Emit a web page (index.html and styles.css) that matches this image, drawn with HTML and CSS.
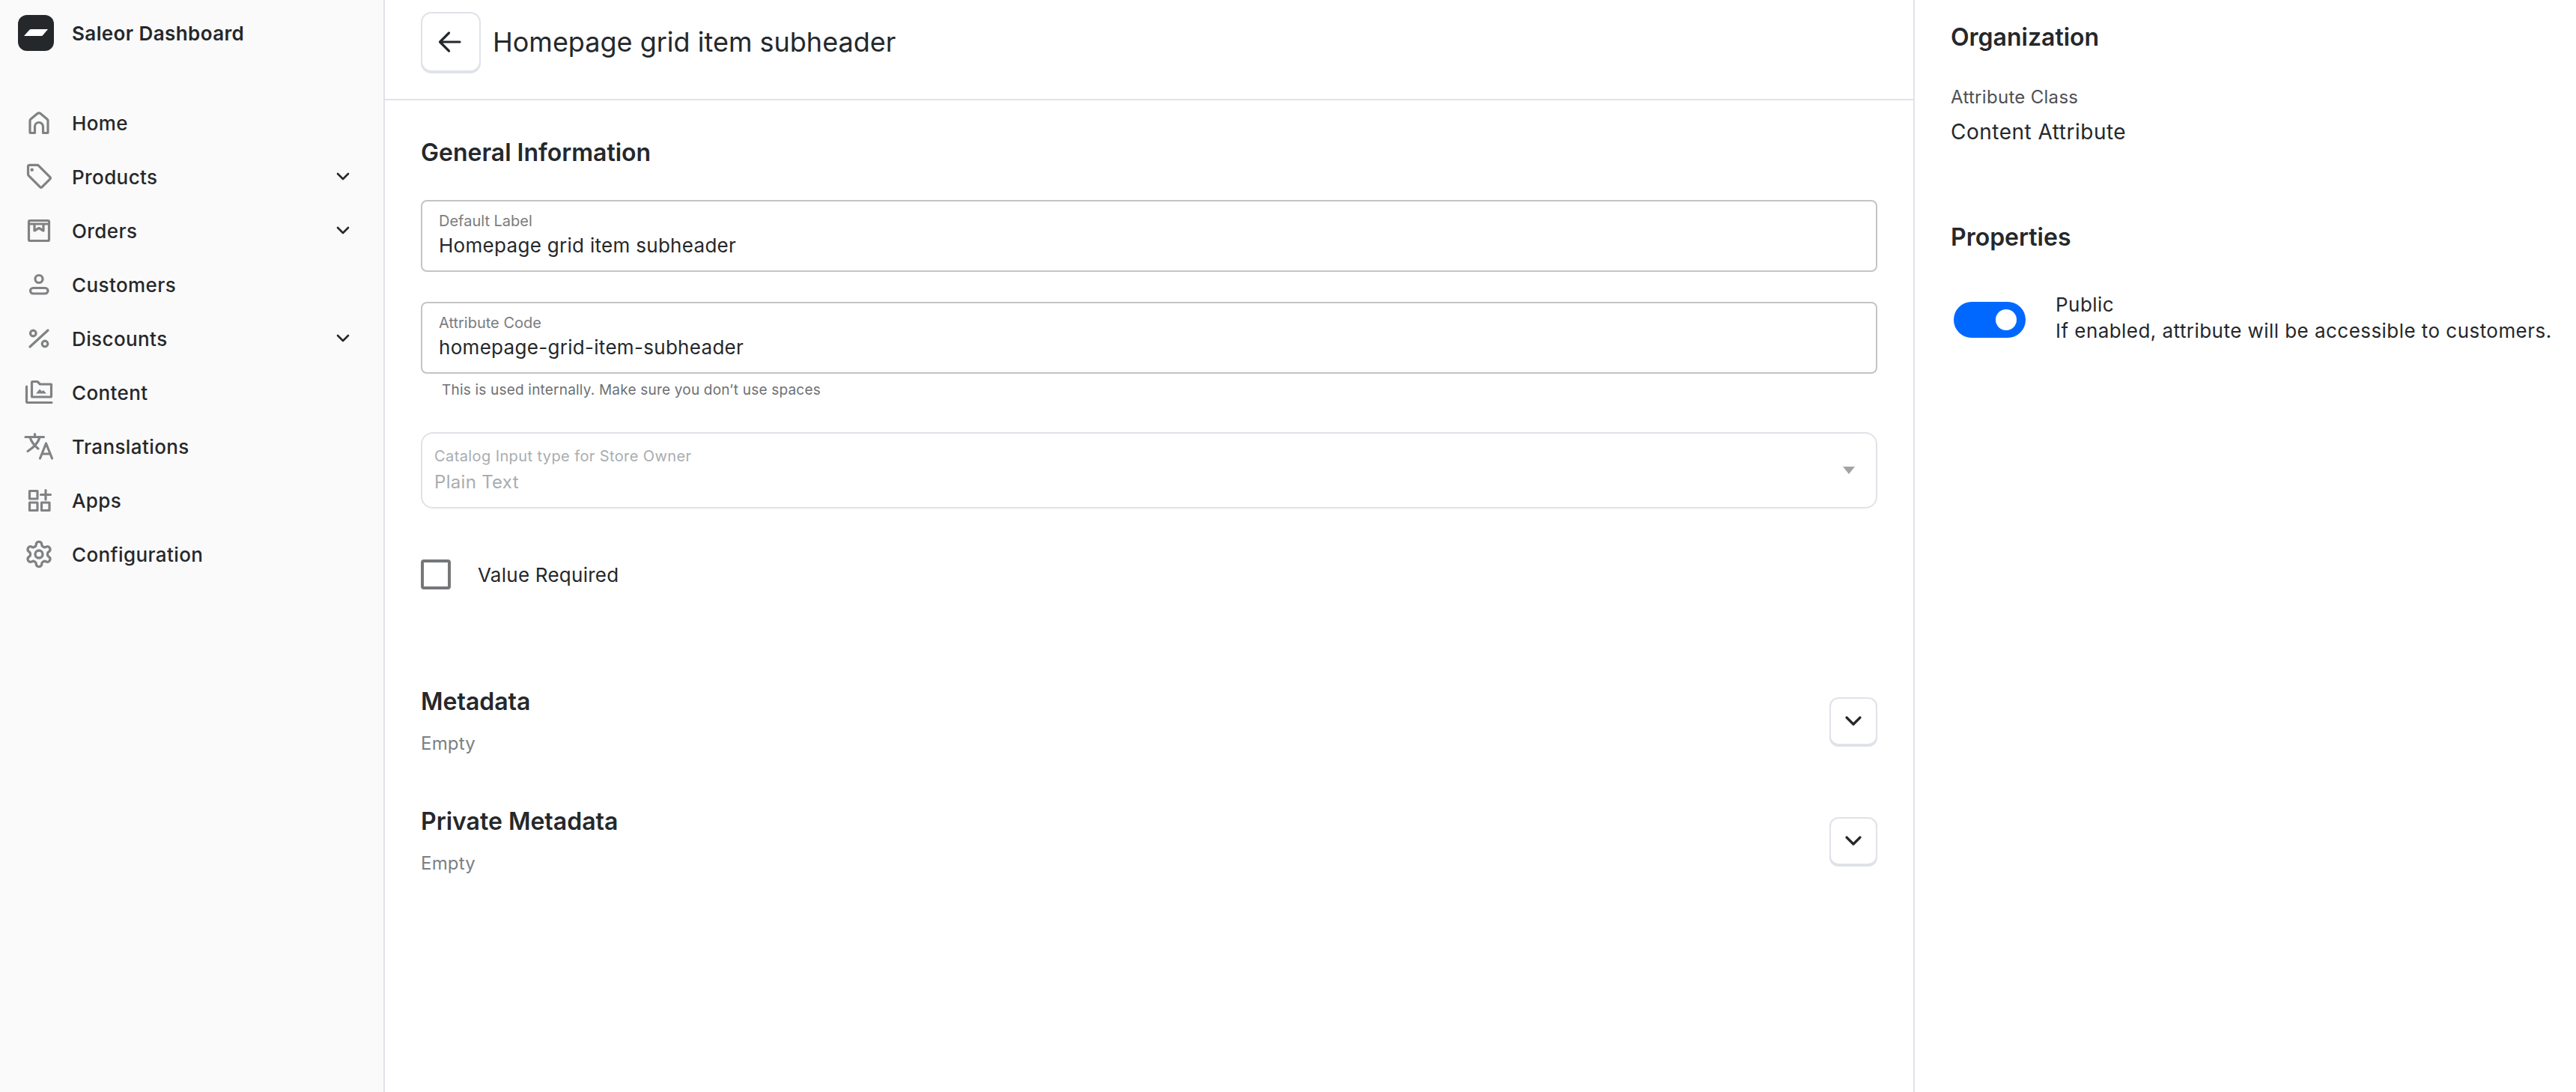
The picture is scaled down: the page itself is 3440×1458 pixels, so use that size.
FILE: index.html
```html
<!DOCTYPE html>
<html lang="en">
<head>
<meta charset="utf-8">
<title>Homepage grid item subheader</title>
<link rel="stylesheet" href="styles.css">
</head>
<body>
<div class="app">
  <aside class="sidebar">
    <div class="brand">
      <div class="logo"><svg width="48" height="48" viewBox="0 0 48 48"><path class="logo-mark" d="M15 20.2c.8-.8 1.5-1.2 2.6-1.2H40l-7 8.200c-.8.800-1.500.800-2.600.800H8z"/></svg></div>
      <span class="brand-name">Saleor Dashboard</span>
    </div>
    <nav class="nav">
      <a class="nav-item"><svg class="nav-icon" viewBox="0 0 40 40"><path d="M8 32.500V17.300c0-.9.400-1.700 1.100-2.300l9-7.400a3 3 0 0 1 3.800 0l9 7.400c.7.600 1.100 1.400 1.100 2.300v15.200a1 1 0 0 1-1 1h-5.500V25a5.500 5.500 0 0 0-11 0v8.500H9a1 1 0 0 1-1-1z"/></svg><span>Home</span></a>
      <a class="nav-item"><svg class="nav-icon" viewBox="0 0 40 40"><path d="M5.500 6.500v10c0 .8.300 1.500.9 2.100l15 15a2 2 0 0 0 2.800 0l10.500-10.500a2 2 0 0 0 0-2.800l-15-15a3 3 0 0 0-2.100-.9h-10a2.100 2.100 0 0 0-2.100 2.100z"/><circle class="fill" cx="10.700" cy="10.700" r="2.200"/></svg><span>Products</span><svg class="chev" viewBox="0 0 24 24"><path d="M5 8l7 7 7-7"/></svg></a>
      <a class="nav-item"><svg class="nav-icon" viewBox="0 0 40 40"><rect x="6.500" y="6.500" width="27" height="27" rx="1.500"/><path d="M6.500 11h27M14 11v9l6-3.500 6 3.500v-9"/></svg><span>Orders</span><svg class="chev" viewBox="0 0 24 24"><path d="M5 8l7 7 7-7"/></svg></a>
      <a class="nav-item"><svg class="nav-icon" viewBox="0 0 40 40"><circle cx="20" cy="12.500" r="5"/><rect x="8.500" y="24.500" width="23.500" height="7.500" rx="3.700"/></svg><span>Customers</span></a>
      <a class="nav-item"><svg class="nav-icon" viewBox="0 0 40 40"><circle cx="12.300" cy="13" r="3.800"/><circle cx="28" cy="27" r="3.800"/><path d="M8 31L32 9"/></svg><span>Discounts</span><svg class="chev" viewBox="0 0 24 24"><path d="M5 8l7 7 7-7"/></svg></a>
      <a class="nav-item"><svg class="nav-icon" viewBox="0 0 40 40"><path d="M10.500 25.500V6.500a1 1 0 0 1 1-1H18l3.500 3.500h15V25a1 1 0 0 1-1 1H11z"/><path d="M3.500 12v20a1.500 1.500 0 0 0 1.500 1.500h32"/><path class="fill no-stroke" d="M16 21.500l5-6 3 3 2-1.500 4 4.500z"/></svg><span>Content</span></a>
      <a class="nav-item"><svg class="nav-icon" viewBox="0 0 40 40"><path d="M2 7.500h24.500M14.500 3.500v4M21 8c-2 7-9 14-16 18.500M8 8c2 6 6 11 11 15M21.500 36l8-20 8 20M24 30h11"/></svg><span>Translations</span></a>
      <a class="nav-item"><svg class="nav-icon" viewBox="0 0 40 40"><rect x="7.500" y="7.500" width="10.500" height="10.500"/><rect x="7.500" y="23" width="10.500" height="10.500"/><rect x="23.500" y="23" width="10.500" height="10.500"/><path d="M29 6.500v12.500M22.500 12.500h13"/></svg><span>Apps</span></a>
      <a class="nav-item"><svg class="nav-icon gear" viewBox="0 0 24 24"><path d="M12.220 2h-.44a2 2 0 0 0-2 2v.18a2 2 0 0 1-1 1.730l-.43.25a2 2 0 0 1-2 0l-.15-.08a2 2 0 0 0-2.730.73l-.22.38a2 2 0 0 0 .73 2.730l.15.1a2 2 0 0 1 1 1.720v.51a2 2 0 0 1-1 1.740l-.15.09a2 2 0 0 0-.73 2.730l.22.38a2 2 0 0 0 2.730.73l.15-.08a2 2 0 0 1 2 0l.43.25a2 2 0 0 1 1 1.730V20a2 2 0 0 0 2 2h.44a2 2 0 0 0 2-2v-.18a2 2 0 0 1 1-1.730l.43-.25a2 2 0 0 1 2 0l.15.08a2 2 0 0 0 2.730-.73l.22-.39a2 2 0 0 0-.73-2.730l-.15-.08a2 2 0 0 1-1-1.740v-.5a2 2 0 0 1 1-1.740l.15-.09a2 2 0 0 0 .73-2.730l-.22-.38a2 2 0 0 0-2.730-.73l-.15.08a2 2 0 0 1-2 0l-.43-.25a2 2 0 0 1-1-1.730V4a2 2 0 0 0-2-2z"/><circle cx="12" cy="12" r="3"/></svg><span>Configuration</span></a>
    </nav>
  </aside>

  <main class="main">
    <header class="topbar">
      <button class="icon-btn back"><svg viewBox="0 0 40 40"><path d="M32 20H6M17.500 8L5.500 20l12 12"/></svg></button>
      <h1 class="page-title">Homepage grid item subheader</h1>
    </header>
    <div class="content">
      <h2 class="section-title">General Information</h2>
      <div class="field first">
        <div class="field-label">Default Label</div>
        <div class="field-value">Homepage grid item subheader</div>
      </div>
      <div class="field second">
        <div class="field-label">Attribute Code</div>
        <div class="field-value">homepage-grid-item-subheader</div>
      </div>
      <div class="helper">This is used internally. Make sure you don’t use spaces</div>
      <div class="select">
        <div class="select-text">
          <div class="select-label">Catalog Input type for Store Owner</div>
          <div class="select-value">Plain Text</div>
        </div>
        <svg class="select-arrow" viewBox="0 0 16 10"><path d="M0 0h16L8 10z"/></svg>
      </div>
      <div class="check-row">
        <span class="checkbox"></span>
        <span class="check-label">Value Required</span>
      </div>
      <section class="meta meta-first">
        <div>
          <h2 class="section-title">Metadata</h2>
          <div class="meta-sub">Empty</div>
        </div>
        <button class="icon-btn small"><svg viewBox="0 0 24 24"><path d="M3 7l9 9 9-9"/></svg></button>
      </section>
      <section class="meta">
        <div>
          <h2 class="section-title">Private Metadata</h2>
          <div class="meta-sub">Empty</div>
        </div>
        <button class="icon-btn small"><svg viewBox="0 0 24 24"><path d="M3 7l9 9 9-9"/></svg></button>
      </section>
    </div>
  </main>

  <aside class="side-panel">
    <h2 class="section-title">Organization</h2>
    <div class="class-label">Attribute Class</div>
    <div class="class-value">Content Attribute</div>
    <h2 class="section-title props">Properties</h2>
    <div class="toggle-row">
      <span class="toggle"><span class="knob"></span></span>
      <div class="toggle-text">
        <div>Public</div>
        <div>If enabled, attribute will be accessible to customers.</div>
      </div>
    </div>
  </aside>
</div>
</body>
</html>
```

FILE: styles.css
```css
* { box-sizing: border-box; }
html, body { margin: 0; height: 100%; background: #fff; }
body { font-family: Inter, "Liberation Sans", sans-serif; color: #25282b; font-size: 28px; }
.app { display: flex; height: 1458px; overflow: hidden; }

.sidebar { width: 514px; flex: none; background: #fafafa; border-right: 2px solid #dfe3e8; padding: 20px 42px 0 24px; }
.brand { display: flex; align-items: center; height: 48px; gap: 24px; }
.logo { width: 48px; height: 48px; border-radius: 12px; background: #25282b; flex: none; }
.logo svg { display: block; }
.logo-mark { fill: #fff; }
.brand-name { font-size: 26px; font-weight: 600; letter-spacing: .4px; }
.nav { margin-top: 60px; }
.nav-item { display: flex; align-items: center; height: 72px; padding-left: 8px; font-weight: 500; font-size: 26px; letter-spacing: .4px; }
.nav-icon { width: 40px; height: 40px; flex: none; margin-right: 24px; fill: none; stroke: #808284; stroke-width: 3.2; stroke-linejoin: round; stroke-linecap: round; }
.nav-icon.gear { stroke-width: 2; }
.nav-icon .fill { fill: #808284; stroke: none; }
.chev { width: 24px; height: 24px; margin-left: auto; fill: none; stroke: #25282b; stroke-width: 2.600; stroke-linecap: round; stroke-linejoin: round; }

.main { flex: 1; min-width: 0; }
.topbar { display: flex; align-items: center; height: 134px; padding: 0 48px; border-bottom: 2px solid #dfe3e8; gap: 16px; padding-bottom: 20px; }
.page-title { margin: 0; font-size: 36px; font-weight: 400; line-height: 48px; }
.icon-btn { display: flex; align-items: center; justify-content: center; padding: 0; background: #fff; border: 2px solid #dfe3e8; box-shadow: 0 2px 0 #dfe3e8; flex: none; }
.back { width: 80px; height: 80px; border-radius: 14px; }
.back svg { width: 40px; height: 40px; fill: none; stroke: #25282b; stroke-width: 3.2; stroke-linecap: round; stroke-linejoin: round; }
.small { width: 64px; height: 64px; border-radius: 12px; }
.small svg { width: 24px; height: 24px; fill: none; stroke: #25282b; stroke-width: 3.2; stroke-linecap: round; stroke-linejoin: round; }

.content { padding: 50px 48px 0; }
.section-title { margin: 0; font-size: 32px; font-weight: 600; line-height: 40px; }
.field { height: 96px; border: 2px solid #c4c4c4; border-radius: 8px; padding: 12px 22px 0; }
.field.first { margin-top: 43px; }
.field.second { margin-top: 40px; }
.field-label { font-size: 20px; line-height: 28px; color: #7a7c7f; }
.field-value { font-size: 26px; letter-spacing: .3px; line-height: 36px; margin-top: 1px; }
.helper { margin: 8px 0 0 28px; font-size: 19px; letter-spacing: .2px; line-height: 28px; color: #6e7174; }
.select { display: flex; align-items: center; height: 102px; margin-top: 42px; border: 2px solid #dfe3e8; border-radius: 16px; padding: 0 28px 0 16px; }
.select-text { flex: 1; }
.select-label { font-size: 20px; letter-spacing: .4px; line-height: 28px; color: #a9adb0; }
.select-value { font-size: 24px; letter-spacing: .3px; line-height: 36px; margin-top: 3px; color: #a9adb0; }
.select-arrow { width: 16px; height: 10px; fill: #a1a4a7; }
.check-row { display: flex; align-items: center; gap: 36px; margin-top: 68px; }
.checkbox { width: 40px; height: 40px; border: 4px solid #757779; border-radius: 4px; flex: none; }
.check-label { font-size: 26px; letter-spacing: .25px; }
.meta { display: flex; align-items: center; justify-content: space-between; margin-top: 68px; }
.meta-first { margin-top: 130px; }
.meta-sub { margin-top: 20px; font-size: 24px; letter-spacing: .2px; line-height: 32px; color: #7c7f83; }

.side-panel { width: 885px; flex: none; border-left: 2px solid #dfe3e8; padding: 30px 0 0 48px; }
.class-label { margin-top: 44px; font-size: 24px; letter-spacing: .3px; line-height: 32px; color: #4e5154; }
.class-value { margin-top: 12px; font-size: 28px; letter-spacing: .5px; line-height: 36px; }
.props { margin-top: 103px; }
.toggle-row { display: flex; align-items: flex-start; gap: 40px; margin-top: 52px; }
.toggle { display: flex; align-items: center; justify-content: flex-end; width: 96px; height: 48px; margin: 14px 0 0 4px; padding-right: 12px; border-radius: 24px; background: #0068ff; flex: none; }
.knob { width: 28px; height: 28px; border-radius: 50%; background: #fff; }
.toggle-text { font-size: 26px; letter-spacing: .45px; line-height: 35px; }
```
